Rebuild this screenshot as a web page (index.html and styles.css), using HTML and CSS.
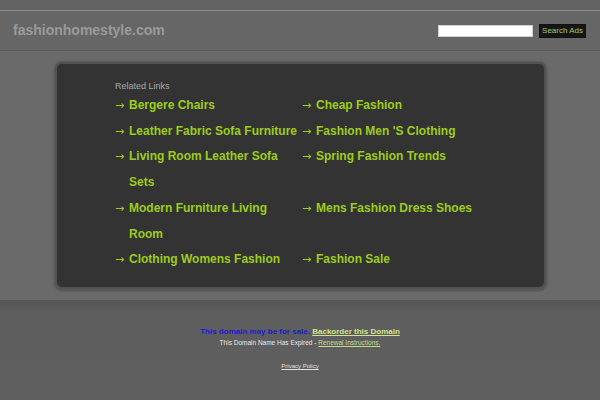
FILE: index.html
```html
<!DOCTYPE html>
<html>
<head>
<meta charset="utf-8">
<link rel="stylesheet" href="styles.css">
</head>
<body>
<div class="topstrip"></div>
<header class="header">
  <div class="domain">fashionhomestyle.com</div>
  <form class="search">
    <input class="search-input" type="text">
    <button class="search-btn" type="button">Search Ads</button>
  </form>
</header>
<main class="main">
  <div class="box">
    <div class="related">Related Links</div>
    <ul class="links">
      <li><span class="arrow">→</span><a href="#">Bergere Chairs</a></li>
      <li><span class="arrow">→</span><a href="#">Cheap Fashion</a></li>
      <li><span class="arrow">→</span><a href="#">Leather Fabric Sofa Furniture</a></li>
      <li><span class="arrow">→</span><a href="#">Fashion Men 'S Clothing</a></li>
      <li><span class="arrow">→</span><a href="#">Living Room Leather Sofa Sets</a></li>
      <li><span class="arrow">→</span><a href="#">Spring Fashion Trends</a></li>
      <li><span class="arrow">→</span><a href="#">Modern Furniture Living Room</a></li>
      <li><span class="arrow">→</span><a href="#">Mens Fashion Dress Shoes</a></li>
      <li><span class="arrow">→</span><a href="#">Clothing Womens Fashion</a></li>
      <li><span class="arrow">→</span><a href="#">Fashion Sale</a></li>
    </ul>
  </div>
</main>
<footer class="footer">
  <p class="sale"><span class="sale-blue">This domain may be for sale.</span> <a href="#" class="backorder">Backorder this Domain</a></p>
  <p class="expired">This Domain Name Has Expired - <a href="#" class="renew">Renewal Instructions.</a></p>
  <p class="privacy"><a href="#">Privacy Policy</a></p>
</footer>
</body>
</html>
```
FILE: styles.css
```css
html, body {
  margin: 0;
  padding: 0;
}
body {
  background: #5f5f5f;
  font-family: "Liberation Sans", Arial, sans-serif;
  width: 600px;
  height: 400px;
  overflow: hidden;
}
.topstrip {
  height: 10px;
  background: #636363;
  border-bottom: 1px solid #8c8c8c;
}
.header {
  height: 39px;
  background: #666666;
  border-bottom: 1px solid #5a5a5a;
  display: flex;
  align-items: center;
  justify-content: space-between;
  padding: 0 14px 0 13px;
}
.domain {
  color: #9a9a9a;
  font-weight: bold;
  font-size: 14px;
  margin-top: -1px;
}
.search {
  display: flex;
  align-items: center;
  gap: 6px;
  margin: 0;
}
.search-input {
  width: 93px;
  height: 10px;
  padding: 0;
  border: 1px solid #d0d0d0;
  background: #fff;
  margin: 0;
}
.search-btn {
  background: #161616;
  color: #a9c96a;
  border: 1px solid #101010;
  font-family: "Liberation Sans", Arial, sans-serif;
  font-size: 8px;
  height: 14px;
  padding: 0 2px;
  margin: 0;
  line-height: 12px;
}
.main {
  background: #6a6a6a;
  padding: 11px 54px 11px 55px;
  height: 227px;
}
.box {
  box-sizing: border-box;
  height: 227px;
  background: #333333;
  border: 2px solid #525252;
  border-radius: 7px;
  box-shadow: 0 0 0 1px #5c5c5c, 0 1px 3px rgba(0,0,0,0.5);
  padding: 16px 0 0 58px;
}
.related {
  color: #a8a8a8;
  font-size: 9px;
  line-height: 12px;
  height: 13px;
}
.links {
  list-style: none;
  margin: 0;
  padding: 0;
  display: grid;
  grid-template-columns: 187px 187px;
}
.links li {
  display: flex;
  font-size: 12px;
  font-weight: bold;
  line-height: 25.7px;
  color: #9ccd1e;
}
.arrow {
  flex: 0 0 14px;
  font-weight: normal;
  font-family: "DejaVu Sans", sans-serif;
  font-size: 11px;
}
.links a {
  color: #9ccd1e;
  text-decoration: none;
}
.footer {
  background: linear-gradient(#565656, #5e5e5e 12px, #5f5f5f);
  height: 100px;
  text-align: center;
  padding-top: 26px;
  box-sizing: border-box;
}
.footer p {
  margin: 0;
}
.sale {
  font-size: 8px;
  font-weight: bold;
  line-height: 11px;
}
.sale-blue {
  color: #1c1cd0;
}
.backorder {
  color: #d3e48a;
  text-decoration: underline;
}
.expired {
  color: #e8e8e8;
  font-size: 6.5px;
  line-height: 11px;
}
.renew {
  color: #c9d98a;
}
.privacy {
  margin-top: 13px !important;
  font-size: 6px;
  line-height: 10px;
}
.privacy a {
  color: #e0e0e0;
}
```
